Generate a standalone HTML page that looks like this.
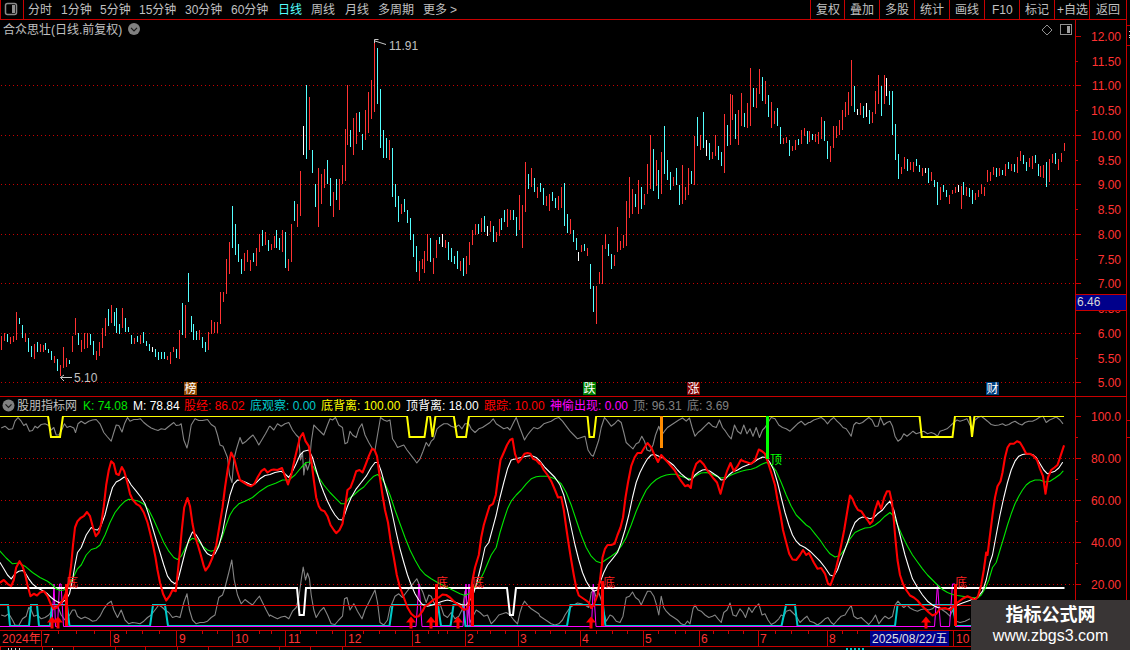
<!DOCTYPE html>
<html><head><meta charset="utf-8"><title>chart</title>
<style>
html,body{margin:0;padding:0;background:#000;}
#root{position:relative;width:1130px;height:650px;overflow:hidden;background:#000;font-family:"Liberation Sans","Noto Sans CJK SC",sans-serif;}
#root svg{position:absolute;left:0;top:0;}
.t{position:absolute;white-space:nowrap;line-height:16px;height:16px;}
</style></head><body>
<div id="root">
<svg width="1130" height="650" viewBox="0 0 1130 650" shape-rendering="crispEdges">
<rect x="0" y="19" width="1127" height="1" fill="#c80000"/>
<rect x="0" y="0" width="1" height="20" fill="#c80000"/>
<rect x="23" y="0" width="1" height="20" fill="#c80000"/>
<rect x="1075" y="20" width="1" height="610" fill="#c80000"/>
<rect x="1126" y="0" width="1" height="650" fill="#c80000"/>
<rect x="0" y="396" width="1127" height="1" fill="#c80000"/>
<rect x="0" y="630" width="1127" height="1" fill="#c80000"/>
<rect x="0" y="646" width="1127" height="1" fill="#c80000"/>
<rect x="0" y="647" width="1" height="3" fill="#c80000"/>
<rect x="42" y="647" width="1" height="3" fill="#c80000"/>
<rect x="73" y="647" width="1" height="3" fill="#c80000"/>
<rect x="115" y="647" width="1" height="3" fill="#c80000"/>
<rect x="145" y="647" width="1" height="3" fill="#c80000"/>
<rect x="177" y="647" width="1" height="3" fill="#c80000"/>
<rect x="208" y="647" width="1" height="3" fill="#c80000"/>
<rect x="279" y="647" width="1" height="3" fill="#c80000"/>
<rect x="310" y="647" width="1" height="3" fill="#c80000"/>
<rect x="342" y="647" width="1" height="3" fill="#c80000"/>
<rect x="8" y="648" width="1" height="2" fill="#d0d0d0"/>
<rect x="11" y="648" width="1" height="2" fill="#d0d0d0"/>
<rect x="15" y="648" width="1" height="2" fill="#d0d0d0"/>
<rect x="19" y="648" width="1" height="2" fill="#d0d0d0"/>
<rect x="52" y="648" width="1" height="2" fill="#d0d0d0"/>
<rect x="846" y="648" width="2" height="2" fill="#00c8c8"/>
<rect x="850" y="648" width="2" height="2" fill="#00c8c8"/>
<rect x="854" y="648" width="2" height="2" fill="#00c8c8"/>
<rect x="858" y="648" width="2" height="2" fill="#00c8c8"/>
<rect x="862" y="648" width="2" height="2" fill="#00c8c8"/>
<rect x="810" y="0" width="1" height="19" fill="#c80000"/>
<rect x="844" y="0" width="1" height="19" fill="#c80000"/>
<rect x="879" y="0" width="1" height="19" fill="#c80000"/>
<rect x="914" y="0" width="1" height="19" fill="#c80000"/>
<rect x="949" y="0" width="1" height="19" fill="#c80000"/>
<rect x="984" y="0" width="1" height="19" fill="#c80000"/>
<rect x="1019" y="0" width="1" height="19" fill="#c80000"/>
<rect x="1054" y="0" width="1" height="19" fill="#c80000"/>
<rect x="1089" y="0" width="1" height="19" fill="#c80000"/>
<rect x="5.5" y="3.5" width="11" height="11" rx="2" fill="none" stroke="#8a8a8a" stroke-width="1.5" shape-rendering="auto"/>
<rect x="12" y="5" width="3" height="8" fill="#909090"/>
<circle cx="134" cy="29" r="6" fill="#808080" shape-rendering="auto"/>
<path d="M131 27.8 L134 30.8 L137 27.8" fill="none" stroke="#181818" stroke-width="1.2" shape-rendering="auto"/>
<path d="M1047 25 L1052 30 L1047 35 L1042 30 Z" fill="none" stroke="#909090" stroke-width="1"/>
<rect x="1060.5" y="24.5" width="11" height="10" rx="1.5" fill="none" stroke="#909090" stroke-width="1.2"/>
<rect x="1067" y="26" width="3" height="7" fill="#a0a0a0"/>
<rect x="1076" y="36" width="5" height="1" fill="#c80000"/>
<rect x="1076" y="61" width="2" height="1" fill="#c80000"/>
<rect x="1076" y="85" width="5" height="1" fill="#c80000"/>
<line x1="1" y1="85.5" x2="1075" y2="85.5" stroke="#c80000" stroke-width="1" stroke-dasharray="1 3"/>
<rect x="1076" y="110" width="2" height="1" fill="#c80000"/>
<rect x="1076" y="135" width="5" height="1" fill="#c80000"/>
<line x1="1" y1="135.5" x2="1075" y2="135.5" stroke="#c80000" stroke-width="1" stroke-dasharray="1 3"/>
<rect x="1076" y="160" width="2" height="1" fill="#c80000"/>
<rect x="1076" y="184" width="5" height="1" fill="#c80000"/>
<line x1="1" y1="184.5" x2="1075" y2="184.5" stroke="#c80000" stroke-width="1" stroke-dasharray="1 3"/>
<rect x="1076" y="209" width="2" height="1" fill="#c80000"/>
<rect x="1076" y="234" width="5" height="1" fill="#c80000"/>
<line x1="1" y1="234.5" x2="1075" y2="234.5" stroke="#c80000" stroke-width="1" stroke-dasharray="1 3"/>
<rect x="1076" y="259" width="2" height="1" fill="#c80000"/>
<rect x="1076" y="283" width="5" height="1" fill="#c80000"/>
<line x1="1" y1="283.5" x2="1075" y2="283.5" stroke="#c80000" stroke-width="1" stroke-dasharray="1 3"/>
<rect x="1076" y="308" width="2" height="1" fill="#c80000"/>
<rect x="1076" y="333" width="5" height="1" fill="#c80000"/>
<line x1="1" y1="333.5" x2="1075" y2="333.5" stroke="#c80000" stroke-width="1" stroke-dasharray="1 3"/>
<rect x="1076" y="358" width="2" height="1" fill="#c80000"/>
<rect x="1076" y="382" width="5" height="1" fill="#c80000"/>
<line x1="1" y1="382.5" x2="1075" y2="382.5" stroke="#c80000" stroke-width="1" stroke-dasharray="1 3"/>
<rect x="1076" y="416" width="5" height="1" fill="#c80000"/>
<rect x="1076" y="437" width="2" height="1" fill="#c80000"/>
<rect x="1076" y="458" width="5" height="1" fill="#c80000"/>
<line x1="1" y1="458.5" x2="1075" y2="458.5" stroke="#c80000" stroke-width="1" stroke-dasharray="1 3"/>
<rect x="1076" y="479" width="2" height="1" fill="#c80000"/>
<rect x="1076" y="500" width="5" height="1" fill="#c80000"/>
<line x1="1" y1="500.5" x2="1075" y2="500.5" stroke="#c80000" stroke-width="1" stroke-dasharray="1 3"/>
<rect x="1076" y="521" width="2" height="1" fill="#c80000"/>
<rect x="1076" y="542" width="5" height="1" fill="#c80000"/>
<line x1="1" y1="542.5" x2="1075" y2="542.5" stroke="#c80000" stroke-width="1" stroke-dasharray="1 3"/>
<rect x="1076" y="563" width="2" height="1" fill="#c80000"/>
<rect x="1076" y="584" width="5" height="1" fill="#c80000"/>
<line x1="1" y1="584.5" x2="1075" y2="584.5" stroke="#c80000" stroke-width="1" stroke-dasharray="1 3"/>
<rect x="1127" y="25" width="3" height="1" fill="#c80000"/>
<rect x="1127" y="45" width="3" height="1" fill="#c80000"/>
<rect x="1127" y="420" width="3" height="1" fill="#c80000"/>
<rect x="1127" y="437" width="3" height="1" fill="#c80000"/>
<rect x="1129" y="31" width="1" height="1" fill="#d0d0d0"/>
<rect x="1129" y="35" width="1" height="1" fill="#d0d0d0"/>
<rect x="1129" y="37" width="1" height="1" fill="#d0d0d0"/>
<circle cx="8.5" cy="405.5" r="6" fill="#808080" shape-rendering="auto"/>
<path d="M5.5 404.3 L8.5 407.3 L11.5 404.3" fill="none" stroke="#181818" stroke-width="1.2" shape-rendering="auto"/>
<rect x="184" y="382" width="13" height="13" fill="#8b4500"/>
<rect x="583" y="382" width="13" height="13" fill="#008000"/>
<rect x="687" y="382" width="13" height="13" fill="#800000"/>
<rect x="986" y="382" width="13" height="13" fill="#004080"/>
<rect x="41" y="630" width="1" height="16" fill="#c80000"/>
<rect x="110" y="630" width="1" height="16" fill="#c80000"/>
<rect x="176" y="630" width="1" height="16" fill="#c80000"/>
<rect x="232" y="630" width="1" height="16" fill="#c80000"/>
<rect x="285" y="630" width="1" height="16" fill="#c80000"/>
<rect x="345" y="630" width="1" height="16" fill="#c80000"/>
<rect x="870" y="631" width="79" height="15" fill="#00008b"/>
<path d="M1 336h1v14h-1zM4 333h1v8h-1zM10 337h1v7h-1zM13 336h1v6h-1zM16 312h1v28h-1zM25 333h1v9h-1zM34 344h1v15h-1zM40 344h1v8h-1zM43 345h1v7h-1zM54 356h1v7h-1zM60 365h1v11h-1zM63 347h1v21h-1zM66 358h1v9h-1zM72 336h1v16h-1zM75 318h1v17h-1zM81 340h1v12h-1zM84 333h1v16h-1zM87 333h1v15h-1zM96 351h1v9h-1zM99 342h1v14h-1zM102 328h1v20h-1zM105 318h1v18h-1zM111 305h1v18h-1zM122 308h1v20h-1zM134 338h1v6h-1zM140 335h1v9h-1zM167 356h1v4h-1zM170 352h1v12h-1zM173 347h1v5h-1zM179 330h1v29h-1zM185 305h1v33h-1zM199 330h1v10h-1zM208 332h1v18h-1zM211 320h1v14h-1zM214 322h1v11h-1zM217 322h1v11h-1zM220 292h1v32h-1zM223 292h1v10h-1zM226 259h1v35h-1zM229 242h1v32h-1zM244 253h1v18h-1zM247 250h1v12h-1zM250 260h1v11h-1zM256 248h1v18h-1zM259 234h1v18h-1zM265 232h1v13h-1zM271 244h1v6h-1zM274 236h1v12h-1zM282 230h1v22h-1zM288 259h1v12h-1zM291 224h1v38h-1zM297 204h1v23h-1zM300 171h1v45h-1zM309 97h1v53h-1zM318 168h1v59h-1zM321 174h1v30h-1zM324 169h1v19h-1zM333 192h1v25h-1zM339 179h1v31h-1zM342 165h1v19h-1zM345 129h1v52h-1zM347 85h1v60h-1zM353 118h1v37h-1zM356 113h1v31h-1zM365 110h1v30h-1zM368 92h1v41h-1zM371 80h1v39h-1zM374 41h1v71h-1zM389 140h1v20h-1zM401 204h1v10h-1zM419 261h1v20h-1zM422 259h1v10h-1zM424 251h1v22h-1zM427 234h1v27h-1zM433 258h1v16h-1zM436 240h1v18h-1zM445 240h1v8h-1zM460 261h1v10h-1zM466 256h1v18h-1zM469 242h1v23h-1zM472 230h1v15h-1zM475 224h1v11h-1zM481 218h1v14h-1zM490 221h1v11h-1zM496 232h1v10h-1zM499 219h1v17h-1zM507 209h1v18h-1zM510 210h1v10h-1zM519 195h1v35h-1zM522 205h1v43h-1zM525 162h1v50h-1zM531 168h1v19h-1zM537 187h1v11h-1zM546 196h1v10h-1zM549 194h1v17h-1zM558 196h1v14h-1zM561 187h1v21h-1zM570 219h1v15h-1zM581 245h1v7h-1zM587 248h1v8h-1zM596 286h1v38h-1zM599 272h1v12h-1zM602 245h1v39h-1zM605 234h1v15h-1zM614 255h1v11h-1zM617 227h1v25h-1zM620 241h1v9h-1zM623 235h1v13h-1zM626 201h1v45h-1zM629 177h1v41h-1zM632 189h1v25h-1zM638 180h1v34h-1zM644 194h1v11h-1zM647 164h1v30h-1zM650 135h1v54h-1zM656 160h1v26h-1zM661 152h1v42h-1zM673 177h1v9h-1zM682 165h1v39h-1zM685 187h1v13h-1zM688 168h1v27h-1zM694 136h1v49h-1zM700 135h1v15h-1zM712 152h1v7h-1zM715 135h1v21h-1zM724 114h1v59h-1zM730 94h1v51h-1zM732 95h1v25h-1zM738 110h1v35h-1zM741 93h1v33h-1zM747 103h1v25h-1zM750 68h1v58h-1zM756 88h1v20h-1zM759 69h1v25h-1zM765 81h1v23h-1zM771 102h1v26h-1zM774 111h1v13h-1zM783 138h1v6h-1zM786 137h1v6h-1zM792 146h1v5h-1zM795 140h1v10h-1zM801 130h1v14h-1zM804 128h1v8h-1zM809 131h1v11h-1zM815 134h1v8h-1zM818 132h1v12h-1zM821 117h1v22h-1zM830 146h1v16h-1zM833 126h1v22h-1zM836 126h1v12h-1zM839 120h1v15h-1zM842 110h1v20h-1zM845 102h1v15h-1zM848 92h1v23h-1zM851 60h1v46h-1zM860 103h1v12h-1zM872 112h1v11h-1zM875 91h1v23h-1zM878 75h1v29h-1zM884 75h1v29h-1zM901 167h1v7h-1zM904 157h1v12h-1zM910 162h1v8h-1zM913 162h1v10h-1zM922 168h1v8h-1zM931 172h1v9h-1zM940 187h1v13h-1zM949 195h1v9h-1zM952 190h1v4h-1zM955 187h1v6h-1zM961 186h1v23h-1zM966 187h1v9h-1zM975 193h1v7h-1zM978 190h1v7h-1zM981 184h1v10h-1zM984 187h1v9h-1zM987 170h1v12h-1zM990 172h1v9h-1zM993 167h1v8h-1zM999 168h1v8h-1zM1005 164h1v12h-1zM1011 164h1v7h-1zM1017 157h1v16h-1zM1020 151h1v10h-1zM1029 158h1v9h-1zM1032 156h1v13h-1zM1040 166h1v11h-1zM1043 165h1v13h-1zM1049 159h1v23h-1zM1052 154h1v9h-1zM1058 159h1v11h-1zM1061 153h1v9h-1zM1064 143h1v8h-1z" fill="#ff3232"/>
<path d="M7 334h1v8h-1zM19 318h1v6h-1zM22 325h1v13h-1zM28 338h1v14h-1zM31 346h1v11h-1zM37 342h1v10h-1zM45 343h1v7h-1zM48 349h1v4h-1zM51 351h1v9h-1zM57 359h1v12h-1zM69 360h1v4h-1zM78 333h1v12h-1zM90 334h1v11h-1zM93 341h1v14h-1zM108 309h1v17h-1zM114 312h1v14h-1zM116 308h1v25h-1zM119 324h1v10h-1zM125 318h1v14h-1zM128 327h1v5h-1zM131 335h1v9h-1zM137 336h1v6h-1zM143 332h1v11h-1zM146 341h1v5h-1zM149 344h1v7h-1zM155 349h1v8h-1zM158 352h1v8h-1zM161 352h1v7h-1zM164 352h1v7h-1zM176 349h1v9h-1zM182 303h1v32h-1zM188 273h1v29h-1zM191 316h1v16h-1zM193 324h1v16h-1zM196 331h1v9h-1zM202 337h1v11h-1zM205 342h1v10h-1zM232 206h1v42h-1zM235 224h1v31h-1zM238 244h1v18h-1zM241 259h1v15h-1zM253 253h1v9h-1zM262 230h1v16h-1zM268 240h1v11h-1zM276 230h1v18h-1zM279 238h1v12h-1zM285 232h1v36h-1zM294 201h1v20h-1zM306 85h1v74h-1zM312 150h1v23h-1zM315 184h1v23h-1zM327 160h1v24h-1zM330 178h1v28h-1zM336 179h1v21h-1zM350 130h1v17h-1zM359 112h1v20h-1zM362 134h1v16h-1zM377 48h1v56h-1zM380 89h1v59h-1zM383 130h1v28h-1zM386 138h1v20h-1zM392 148h1v49h-1zM395 184h1v23h-1zM398 196h1v26h-1zM404 199h1v13h-1zM407 210h1v13h-1zM410 218h1v22h-1zM413 234h1v23h-1zM416 246h1v26h-1zM430 238h1v24h-1zM439 237h1v7h-1zM448 242h1v18h-1zM451 248h1v14h-1zM454 256h1v8h-1zM457 251h1v18h-1zM463 258h1v18h-1zM478 224h1v10h-1zM484 216h1v16h-1zM493 226h1v16h-1zM501 218h1v12h-1zM504 210h1v12h-1zM513 210h1v10h-1zM516 217h1v19h-1zM528 174h1v15h-1zM534 178h1v14h-1zM540 183h1v9h-1zM543 188h1v17h-1zM552 192h1v9h-1zM555 198h1v10h-1zM564 183h1v43h-1zM567 214h1v19h-1zM573 230h1v12h-1zM576 238h1v12h-1zM584 244h1v7h-1zM590 264h1v25h-1zM593 286h1v26h-1zM608 244h1v12h-1zM611 254h1v15h-1zM635 194h1v13h-1zM641 187h1v22h-1zM653 149h1v42h-1zM658 170h1v29h-1zM664 126h1v48h-1zM667 160h1v20h-1zM670 172h1v18h-1zM676 168h1v17h-1zM679 185h1v20h-1zM691 171h1v13h-1zM697 117h1v29h-1zM703 112h1v36h-1zM709 143h1v17h-1zM718 146h1v14h-1zM721 152h1v14h-1zM727 125h1v21h-1zM735 114h1v25h-1zM744 113h1v14h-1zM753 88h1v19h-1zM762 77h1v24h-1zM768 95h1v22h-1zM777 108h1v18h-1zM780 127h1v17h-1zM789 140h1v16h-1zM798 139h1v6h-1zM807 131h1v13h-1zM812 134h1v6h-1zM824 121h1v20h-1zM827 141h1v18h-1zM854 86h1v26h-1zM863 106h1v12h-1zM869 110h1v14h-1zM881 86h1v30h-1zM889 91h1v14h-1zM892 91h1v44h-1zM895 124h1v36h-1zM898 154h1v25h-1zM907 159h1v12h-1zM916 159h1v7h-1zM919 165h1v7h-1zM928 168h1v15h-1zM934 180h1v7h-1zM937 182h1v23h-1zM943 185h1v7h-1zM946 190h1v7h-1zM963 182h1v13h-1zM969 188h1v9h-1zM972 190h1v14h-1zM996 168h1v9h-1zM1002 170h1v5h-1zM1008 162h1v7h-1zM1014 164h1v8h-1zM1023 155h1v9h-1zM1026 162h1v9h-1zM1035 155h1v8h-1zM1038 164h1v12h-1zM1046 162h1v25h-1zM1055 153h1v11h-1z" fill="#54ffff"/>
<path d="M152 347h1v5h-1zM303 126h1v29h-1zM442 234h1v13h-1zM487 226h1v10h-1zM578 252h1v9h-1zM706 140h1v16h-1zM857 109h1v6h-1zM866 103h1v14h-1zM886 78h1v18h-1zM925 168h1v5h-1zM958 185h1v7h-1z" fill="#ffffff"/>
<path d="M374.5 43 V39.5 H378.5 M375 41 L386 44.5" fill="none" stroke="#c8c8c8" stroke-width="1" shape-rendering="auto"/>
<path d="M60.5 377.5 H72 M64 375 L60.5 377.5 L64 381" fill="none" stroke="#c8c8c8" stroke-width="1" shape-rendering="auto"/>
<g shape-rendering="auto" stroke-linejoin="round">
<polyline points="1.2,428.0 5.0,426.2 8.8,429.5 12.5,428.8 15.0,421.2 18.0,417.5 21.2,421.2 23.8,425.5 26.2,423.8 29.5,431.2 32.5,430.5 35.0,426.2 37.5,428.0 41.2,424.5 45.0,423.8 48.8,425.5 51.2,430.0 53.8,427.5 56.2,435.0 58.8,435.0 61.2,431.2 64.5,423.8 67.0,427.5 70.0,426.2 73.8,428.0 75.5,432.5 78.0,423.8 81.2,421.2 85.0,423.8 88.8,421.2 92.5,420.0 96.2,419.5 100.0,423.8 103.8,432.5 107.5,437.0 111.2,441.2 113.8,432.5 116.2,425.0 118.8,425.5 122.0,432.0 124.5,423.8 127.5,417.5 130.0,421.2 133.8,419.5 137.5,419.5 140.5,418.8 143.8,422.5 147.5,425.5 151.2,428.0 155.0,429.5 158.0,430.5 161.2,428.8 165.0,429.5 168.0,427.0 171.2,424.5 173.8,422.5 176.2,425.5 179.5,425.0 181.2,423.8 183.8,440.0 187.0,448.0 188.8,440.0 191.2,425.0 195.0,418.8 198.8,420.5 202.5,420.5 207.5,419.5 211.2,424.5 215.0,427.0 217.5,435.0 220.0,445.0 223.0,446.2 225.0,451.2 227.5,457.5 229.5,475.0 232.0,482.5 233.8,460.0 236.2,450.0 240.0,437.5 242.5,443.8 246.2,441.2 250.0,437.5 253.0,435.0 256.2,440.0 258.8,445.0 262.5,438.8 265.5,433.8 269.5,426.2 270.0,426.2 273.8,430.0 277.5,423.8 281.2,426.2 285.0,423.8 288.8,422.5 292.5,430.0 296.2,435.0 298.8,437.5 300.5,460.0 302.5,452.5 303.8,475.0 305.5,462.5 307.5,470.0 309.5,463.8 311.2,442.5 313.8,425.0 317.5,428.8 321.2,432.5 323.8,435.0 327.5,425.0 330.0,418.8 332.5,420.0 335.5,417.5 338.8,425.0 342.5,427.5 345.0,443.8 347.5,442.5 350.0,431.2 352.5,435.0 356.2,437.5 358.8,428.8 362.0,423.8 365.0,435.0 368.8,442.5 372.5,448.8 375.0,450.0 377.5,435.0 380.5,417.5 383.8,420.0 387.0,421.2 390.0,420.0 392.5,438.8 395.0,442.5 397.5,447.5 400.5,446.2 403.8,445.0 407.0,450.0 410.0,453.8 413.8,458.8 416.8,463.0 420.0,458.8 423.0,451.2 426.2,442.5 428.8,446.2 431.2,441.2 433.8,438.8 437.0,428.8 440.0,426.2 443.8,423.8 447.5,423.8 451.2,426.2 455.0,427.5 458.8,425.0 462.0,428.8 465.0,423.8 468.8,423.8 471.2,428.8 475.0,432.5 478.8,428.8 482.5,427.5 486.2,425.0 490.0,422.5 493.2,418.8 496.2,423.8 500.0,426.2 503.8,428.8 507.5,427.5 510.0,430.0 513.0,423.8 516.2,417.5 518.8,425.0 521.2,431.2 524.5,440.0 527.5,435.0 530.5,431.2 533.8,427.5 537.5,428.8 540.0,427.5 543.8,423.8 547.5,422.5 551.2,421.2 555.0,418.8 558.8,417.5 562.5,421.2 566.2,426.2 570.0,431.2 573.8,435.0 577.5,438.8 581.2,437.5 585.0,436.2 588.0,450.0 591.2,455.0 593.2,456.2 595.5,450.0 598.8,440.0 601.2,427.5 604.5,417.5 607.5,421.2 611.2,426.2 614.5,423.8 618.0,420.0 621.2,422.5 623.8,432.5 626.2,442.5 630.0,446.2 633.0,448.8 636.2,443.8 638.8,442.5 641.8,436.2 644.5,441.2 647.0,450.0 650.0,451.2 653.0,445.0 655.5,435.0 658.8,426.2 661.8,435.0 664.5,431.2 667.5,427.5 671.2,425.0 675.0,422.5 678.8,420.0 682.5,418.0 686.2,421.2 689.5,418.0 692.5,428.8 695.0,436.2 698.0,432.5 701.2,430.0 705.0,426.2 708.8,422.5 712.5,426.2 716.2,427.5 719.5,420.0 722.5,427.5 725.5,431.2 728.8,436.2 731.2,438.8 734.5,425.0 737.5,431.2 740.8,433.8 743.8,425.0 747.0,433.8 750.0,428.8 753.0,436.2 756.2,427.5 759.5,437.5 762.5,430.0 765.0,427.5 768.0,422.5 771.2,417.5 775.0,418.8 778.8,425.0 782.5,427.5 786.2,428.8 790.0,431.2 793.8,427.5 797.5,423.8 801.2,421.2 805.0,425.0 808.8,422.5 810.0,422.5 813.8,420.0 817.5,418.8 821.2,417.5 824.5,420.0 827.5,423.8 830.5,420.0 833.8,417.5 837.0,421.2 840.0,423.8 843.0,427.5 846.2,428.8 848.8,432.5 851.2,436.2 853.8,425.0 856.2,422.5 859.2,423.8 862.5,422.5 865.5,420.0 868.8,417.5 872.0,420.0 875.0,426.2 878.0,426.2 880.5,417.5 883.8,425.0 887.0,422.5 890.0,421.2 892.5,426.2 895.0,436.2 898.0,441.2 901.2,438.8 903.8,433.8 907.0,436.2 910.0,433.8 913.0,431.2 916.2,433.8 920.0,432.5 923.8,431.2 927.5,433.8 931.2,432.5 934.5,433.8 937.5,436.2 940.0,431.2 943.8,430.0 947.0,428.8 950.0,426.2 953.8,422.5 957.0,420.0 960.0,421.2 963.8,420.0 967.0,418.8 970.0,425.0 972.5,427.5 975.0,420.0 978.0,417.5 981.2,416.2 984.5,418.8 987.5,421.2 991.2,424.5 995.0,425.5 998.8,425.0 1002.5,423.8 1005.5,425.5 1008.8,424.5 1012.0,422.5 1015.0,421.2 1018.8,423.8 1022.0,425.0 1025.0,422.5 1028.8,421.2 1032.5,421.2 1036.2,419.5 1040.0,417.0 1043.0,416.2 1046.2,422.5 1049.5,420.0 1052.5,418.8 1056.2,417.0 1060.0,420.0 1063.0,423.8" fill="none" stroke="#858585" stroke-width="1.1" />
<polyline points="1.2,615.0 5.0,616.2 8.8,613.8 12.5,620.0 15.0,625.0 18.8,625.5 22.5,618.8 26.2,616.2 28.8,607.5 31.2,610.0 33.8,616.2 37.5,615.0 41.2,618.8 45.0,617.5 48.8,615.0 52.5,610.0 56.2,606.2 58.8,608.8 61.2,615.0 65.0,620.0 68.8,616.2 72.5,610.0 75.0,610.0 77.5,616.2 81.2,618.8 85.0,617.0 88.8,618.8 92.5,621.2 96.2,620.5 100.0,616.2 103.8,608.8 107.5,603.8 111.2,601.2 113.8,610.0 117.5,617.5 121.2,610.0 125.0,620.0 128.8,623.8 132.5,622.5 136.2,623.0 140.0,623.8 143.8,621.2 147.5,617.5 151.2,615.0 155.0,610.0 158.8,605.0 162.5,607.5 165.0,610.0 168.8,612.5 172.5,617.5 176.2,616.2 180.0,617.5 183.8,602.5 187.0,593.8 189.5,610.0 192.5,620.0 196.2,623.8 200.0,622.5 203.8,622.5 207.5,621.2 211.2,617.5 215.0,615.0 218.8,597.5 222.5,595.0 225.0,587.5 228.8,572.5 231.8,560.0 234.2,580.0 237.5,595.0 241.2,603.8 245.0,599.5 248.8,602.5 252.5,605.0 256.2,600.0 259.5,596.2 262.5,602.5 266.2,610.0 269.5,616.2 270.0,615.0 273.8,617.0 277.5,618.8 281.2,617.0 285.0,616.2 288.8,618.8 292.5,611.2 296.2,607.5 298.8,597.5 301.2,580.0 303.2,567.0 305.5,580.0 307.5,573.0 309.5,578.8 311.2,595.0 313.8,610.0 316.2,617.5 320.0,611.2 323.8,607.5 327.5,615.0 331.2,623.8 335.0,624.5 338.8,620.0 342.5,616.2 344.5,598.8 347.0,597.5 350.0,610.0 353.8,603.8 357.5,611.2 362.0,618.8 365.0,610.0 368.8,602.5 372.5,595.0 375.0,590.0 377.5,602.5 380.0,622.5 383.8,625.0 387.5,620.0 390.0,607.5 392.5,602.5 395.0,596.2 398.8,593.8 402.5,597.5 406.2,592.5 410.0,587.5 413.8,582.5 416.8,578.8 420.0,586.2 423.0,592.5 426.2,602.5 428.8,595.0 431.2,596.2 433.8,602.5 436.2,605.0 440.0,603.8 443.8,615.0 447.5,617.5 451.2,612.5 455.0,618.8 458.8,616.2 462.5,608.8 465.0,591.2 467.5,605.0 470.0,622.5 473.0,616.2 476.2,610.0 480.0,612.5 483.8,616.2 487.5,615.0 491.2,623.8 495.0,620.0 498.8,615.0 502.5,613.8 506.2,612.5 510.0,615.0 513.8,620.0 517.5,623.8 520.0,612.5 522.5,605.0 524.5,601.2 527.5,605.0 531.2,608.8 535.0,611.2 538.8,613.8 540.0,616.2 543.8,618.8 547.5,621.2 551.2,623.8 555.0,625.0 558.8,623.8 562.5,620.0 565.0,615.0 567.5,611.2 570.0,607.5 573.8,605.0 577.5,603.0 581.2,603.8 585.0,605.0 588.8,607.5 591.2,592.5 593.8,590.0 596.2,597.5 598.8,592.5 601.2,600.0 603.8,612.5 606.2,621.2 610.0,615.0 612.5,616.2 616.2,621.2 620.0,622.5 623.0,616.2 626.2,597.5 629.5,596.2 632.5,592.0 635.5,597.5 638.8,600.0 641.2,605.0 644.5,597.5 647.5,591.2 650.5,591.2 653.8,596.2 656.2,603.8 658.8,615.0 661.2,596.2 663.8,607.5 666.2,611.2 670.0,615.0 673.8,617.5 677.5,620.0 681.2,623.8 684.5,625.0 687.5,621.2 690.0,623.8 693.0,608.8 695.0,605.0 698.0,610.0 701.2,611.2 705.0,615.0 708.8,617.5 712.5,616.2 715.0,615.0 718.0,618.8 721.2,622.5 723.8,612.5 727.0,610.0 730.0,603.0 733.0,615.0 736.2,616.2 740.0,608.8 743.0,612.5 745.5,617.5 748.8,607.5 752.0,612.5 755.0,607.5 758.8,603.8 762.0,615.0 765.0,613.8 768.0,620.0 771.2,624.5 775.0,622.5 778.8,618.8 781.2,615.0 783.8,616.2 786.2,611.2 790.0,610.0 792.5,612.5 796.2,616.2 800.0,622.5 803.8,618.8 807.0,616.2 810.0,621.2 813.8,622.5 817.5,625.0 821.2,622.5 825.0,618.8 828.0,617.5 831.2,622.5 833.8,624.5 837.5,620.0 841.2,616.2 845.0,615.0 848.0,610.0 851.2,605.5 853.8,616.2 857.5,618.8 861.2,617.5 865.0,621.2 868.8,624.5 872.5,620.0 875.5,615.0 878.8,623.8 882.5,618.8 885.0,616.2 888.8,618.8 892.5,616.2 895.0,605.0 898.0,601.2 901.2,605.0 903.8,607.5 907.0,605.0 910.0,608.0 913.8,610.0 917.5,611.2 921.2,609.5 925.0,608.8 928.8,610.0 932.5,608.8 935.0,606.2 938.8,607.5 942.5,610.0 946.2,612.5 950.0,616.2 952.5,610.0 956.2,621.2 960.0,622.5 965.0,621.2 970.0,618.8" fill="none" stroke="#858585" stroke-width="1.1" />
</g>
<g shape-rendering="auto" stroke-linejoin="miter">
<polyline points="0.0,605.0 8.0,605.0 10.0,626.0 29.0,626.0 31.0,605.0 37.0,605.0 39.0,626.0 50.0,626.0 52.0,605.0 67.0,605.0 69.5,626.0 150.0,626.0 153.0,605.0 165.0,605.0 168.0,626.0 389.5,626.0 392.5,605.0 438.0,605.0 441.0,626.0 450.5,626.0 453.5,605.0 463.0,605.0 465.5,626.0 567.0,626.0 570.5,605.0 603.0,605.0 605.5,626.0 781.5,626.0 786.0,605.0 795.0,605.0 797.5,626.0 895.0,626.0 897.5,605.0 953.0,605.0 956.0,626.0 1064.0,626.0" fill="none" stroke="#00c8c8" stroke-width="2" />
<polyline points="0.0,626.5 52.0,626.5 54.0,584.0 55.5,626.5 57.5,626.5 59.5,584.0 61.0,584.0 63.5,626.5 416.0,626.5 419.0,584.0 422.0,626.5 463.0,626.5 466.0,584.0 467.5,626.5 469.0,584.0 470.0,626.5 591.5,626.5 593.3,584.0 596.0,626.5 934.5,626.5 937.5,584.0 940.5,626.5 949.5,626.5 952.5,584.0 955.0,584.0 956.0,626.5 1064.0,626.5" fill="none" stroke="#ff00ff" stroke-width="1" />
<rect x="0" y="605" width="1075" height="1" fill="#e00000"/>
<clipPath id="cp"><rect x="0" y="416" width="1075" height="214"/></clipPath>
<polyline points="0.0,416.0 48.0,416.0 51.0,437.0 60.0,437.0 63.0,416.0 407.0,416.0 409.5,437.0 424.5,437.0 427.5,416.0 430.0,416.0 432.5,437.0 435.5,416.0 453.8,416.0 457.0,437.0 466.0,437.0 469.0,416.0 587.5,416.0 589.5,437.0 593.8,437.0 596.2,416.0 919.5,416.0 921.8,437.0 952.5,437.0 955.0,416.0 970.0,416.0 972.0,437.0 974.5,416.0 1064.0,416.0" fill="none" stroke="#ffff00" stroke-width="2" clip-path="url(#cp)"/>
<polyline points="0.0,588.0 297.0,588.0 299.5,615.0 303.8,615.0 306.0,588.0 507.0,588.0 510.0,615.0 513.0,615.0 516.0,588.0 1064.5,588.0" fill="none" stroke="#ffffff" stroke-width="2" />
</g>
<g shape-rendering="auto" stroke-linejoin="round" stroke-linecap="round">
<polyline points="0.0,551.2 6.2,558.0 12.5,563.8 18.8,563.0 25.0,566.2 32.5,572.5 40.0,577.5 47.5,581.2 52.5,585.0 56.2,588.8 60.0,590.5 63.8,590.0 68.8,585.0 73.8,576.2 77.5,568.8 81.2,565.0 86.2,555.0 91.2,549.5 96.2,548.0 100.0,545.0 105.0,535.0 110.0,522.5 115.0,512.5 120.0,506.2 125.0,501.2 128.8,499.2 133.8,500.0 138.8,501.2 143.8,504.2 148.8,510.0 153.8,520.0 158.8,531.2 163.8,542.5 168.8,551.2 173.8,557.5 177.5,559.5 181.2,556.2 185.0,548.8 188.8,541.2 192.5,538.2 197.5,540.0 202.5,546.2 207.5,550.0 211.2,551.2 215.0,550.0 218.8,545.0 222.5,536.2 226.2,525.0 230.0,515.0 233.8,508.8 238.8,503.8 245.0,501.2 252.5,497.5 260.0,491.2 267.5,486.2 276.2,483.0 282.5,480.0 288.8,480.0 295.0,475.0 301.2,467.5 306.2,462.5 310.0,462.0 313.8,467.5 318.8,477.5 323.8,485.0 330.0,492.5 336.2,498.8 341.2,503.8 345.0,503.8 348.8,498.8 353.8,495.0 358.8,490.5 363.8,487.0 368.8,481.2 373.8,476.2 377.5,474.5 381.2,477.5 385.0,483.8 390.0,495.0 395.0,510.0 400.0,523.8 405.0,537.5 410.0,550.0 415.0,560.0 420.0,568.8 425.0,574.5 431.2,578.8 437.5,582.5 445.0,586.2 452.5,590.0 460.0,593.8 465.0,595.5 468.8,593.8 472.5,590.0 476.2,585.0 480.0,580.0 483.8,572.5 487.5,563.8 491.2,555.0 496.2,547.5 500.0,532.5 503.8,520.0 507.5,508.8 511.2,501.2 516.2,495.0 521.2,490.0 526.2,483.8 531.2,478.8 536.2,476.8 540.0,476.2 547.5,476.2 555.0,478.8 561.2,483.8 566.2,492.5 571.2,505.0 576.2,520.0 581.2,535.0 586.2,547.5 591.2,556.2 596.2,561.2 601.2,563.0 606.2,559.5 611.2,556.2 616.2,552.5 621.2,546.2 626.2,537.5 631.2,525.0 636.2,511.2 641.2,500.0 646.2,490.0 651.2,483.8 656.2,479.5 661.2,476.8 666.2,475.0 671.2,474.2 676.2,474.2 681.2,476.2 686.2,478.0 691.2,478.8 696.2,475.5 701.2,473.0 706.2,472.5 711.2,473.8 716.2,476.2 721.2,478.0 726.2,477.5 731.2,475.0 736.2,473.0 741.2,471.2 746.2,470.0 751.2,469.2 756.2,467.5 761.2,464.5 766.2,462.5 771.2,464.5 776.2,471.2 781.2,482.5 786.2,495.0 791.2,506.2 796.2,515.0 801.2,520.0 806.2,525.0 810.0,527.5 815.0,533.8 820.0,540.0 825.0,547.5 830.0,553.8 835.0,557.0 840.0,555.5 845.0,548.8 850.0,538.8 855.0,532.5 860.0,530.0 865.0,528.0 870.0,527.5 875.0,525.0 880.0,521.2 885.0,516.2 890.0,512.5 893.8,516.2 897.5,525.0 902.5,536.2 907.5,546.2 912.5,555.0 917.5,562.0 922.5,568.8 927.5,575.0 932.5,580.0 937.5,585.0 942.5,589.5 947.5,592.5 952.5,594.5 957.5,595.5 962.5,596.2 967.5,597.0 972.5,597.5 977.5,598.0 981.2,595.0 985.0,588.8 988.8,580.0 992.5,567.5 996.2,562.5 1000.0,550.0 1003.8,537.5 1007.5,525.0 1011.2,513.8 1015.0,503.8 1018.8,496.2 1022.5,490.0 1026.2,485.0 1030.0,482.0 1035.0,480.0 1040.0,480.0 1045.0,482.0 1050.0,481.2 1055.0,478.0 1060.0,474.5 1063.0,471.2" fill="none" stroke="#00e600" stroke-width="1.1" />
<polyline points="0.0,562.5 3.8,568.8 7.5,575.0 11.2,578.8 15.0,573.8 18.8,571.2 22.5,570.5 25.0,572.5 28.8,578.8 32.5,583.8 37.5,588.0 42.5,590.5 47.5,593.8 51.2,597.5 55.0,600.5 58.8,602.5 62.5,602.0 66.2,599.5 69.5,593.8 72.5,580.0 75.0,565.0 77.5,552.5 81.2,547.5 86.2,535.0 91.2,527.5 94.5,529.5 97.5,530.0 100.8,526.2 105.0,515.0 108.8,500.0 112.5,487.5 116.2,482.0 120.0,480.0 124.2,477.0 127.5,478.8 131.2,485.0 136.2,491.2 141.2,497.5 145.0,503.8 148.8,515.0 152.5,527.5 156.2,540.0 160.0,552.5 163.8,565.0 167.5,576.2 171.2,581.2 175.0,583.8 178.0,580.0 181.2,567.5 185.0,552.5 188.8,540.0 192.5,532.0 196.2,535.0 200.0,541.2 203.8,548.8 207.5,553.8 211.2,555.8 215.0,553.8 218.8,546.2 222.5,532.5 226.2,512.5 230.0,495.0 233.8,483.8 237.5,480.0 241.2,480.5 246.2,482.5 251.2,485.0 255.0,483.8 260.0,478.8 265.0,475.5 270.0,474.5 275.0,472.5 281.2,471.2 285.0,473.8 288.8,477.5 292.5,471.2 296.2,463.8 300.0,455.0 303.8,451.2 308.8,450.0 312.5,457.5 316.2,470.0 320.0,482.5 323.8,492.5 327.5,501.2 331.2,508.8 335.0,515.0 338.8,519.5 342.0,520.0 344.5,515.0 347.5,506.2 351.2,497.5 356.2,488.8 361.2,482.5 366.2,476.2 371.2,467.5 375.0,462.5 378.0,462.5 381.2,471.2 385.0,485.0 388.8,498.8 392.5,515.0 396.2,532.5 400.0,548.8 403.8,562.5 407.5,575.0 411.2,585.0 415.0,593.8 418.8,600.0 422.5,604.5 427.5,606.2 432.5,605.0 437.5,603.0 442.5,601.2 447.5,600.0 452.5,601.2 457.5,603.0 462.5,605.0 466.2,605.0 470.0,600.0 473.8,592.5 477.5,580.0 481.2,565.0 485.0,547.5 488.8,542.5 492.5,528.8 496.2,515.0 500.0,497.5 503.8,482.5 507.5,468.8 511.2,460.0 516.2,458.8 521.2,457.5 526.2,456.2 531.2,455.5 536.2,457.5 540.0,461.2 545.0,467.5 550.0,472.5 555.0,477.5 560.0,485.0 563.8,495.0 567.5,510.0 571.2,527.5 575.0,545.0 578.8,560.0 582.5,572.5 586.2,581.2 590.0,587.5 593.8,591.2 597.0,590.0 600.0,582.5 603.8,572.5 607.5,565.0 612.5,558.8 617.5,552.5 621.2,542.5 625.0,530.0 628.8,515.0 632.5,497.5 636.2,482.5 640.0,472.5 643.8,465.0 647.5,458.8 651.2,455.0 655.0,454.5 658.8,456.2 662.5,457.5 666.2,460.0 670.0,462.5 673.8,465.5 677.5,470.0 681.2,473.8 685.0,477.0 688.8,480.0 692.0,479.5 695.0,475.0 698.8,472.0 702.5,470.0 706.2,469.5 710.0,471.2 713.8,473.8 717.5,476.2 721.2,480.0 725.0,479.5 728.8,475.0 732.5,472.0 737.5,470.0 742.5,467.0 747.5,465.0 752.5,463.0 757.5,459.5 762.5,457.0 766.2,457.5 770.0,462.5 773.8,470.0 777.5,482.5 781.2,497.5 785.0,512.5 788.8,525.0 792.5,535.0 796.2,541.2 800.0,545.0 805.0,547.5 810.0,551.2 815.0,556.2 820.0,561.2 825.0,567.5 830.0,575.0 833.8,576.2 837.5,570.0 840.0,562.5 843.8,552.5 847.5,542.5 851.2,531.2 855.0,522.5 858.8,518.8 862.5,517.0 866.2,517.5 870.0,518.8 873.8,517.5 877.5,513.8 882.5,510.0 886.2,505.0 890.0,501.2 893.8,510.0 897.5,525.0 901.2,540.0 905.0,555.0 908.8,567.5 912.5,578.8 917.5,587.5 922.5,595.0 927.5,601.2 932.5,605.0 937.5,607.5 942.5,608.8 947.5,608.8 952.5,607.5 957.5,605.0 962.5,603.0 967.5,601.2 972.5,599.5 977.5,597.5 982.5,591.2 986.2,580.0 990.0,562.5 992.5,555.0 996.2,535.0 1000.0,515.0 1003.8,497.5 1007.5,482.5 1011.2,470.0 1015.0,461.2 1018.8,456.2 1022.5,454.5 1027.5,453.8 1032.5,454.5 1036.2,457.5 1040.0,463.8 1043.8,470.0 1047.5,473.8 1051.2,472.5 1055.0,471.2 1058.8,468.0 1062.5,462.5" fill="none" stroke="#ffffff" stroke-width="1.1" />
<polyline points="0.0,582.5 3.8,580.0 7.5,583.8 11.2,586.2 13.8,580.0 16.2,567.5 19.5,561.2 22.5,566.2 25.0,573.8 27.5,585.0 30.5,596.2 33.8,593.8 37.0,595.5 40.0,592.5 43.8,591.2 47.5,596.2 51.2,605.0 53.8,608.8 57.0,607.5 60.0,603.8 63.0,600.0 65.5,593.8 68.8,582.5 71.2,565.0 73.0,545.0 75.0,527.5 77.5,521.2 80.5,518.0 83.8,516.2 87.0,512.0 90.0,516.2 93.0,527.5 95.8,536.2 98.8,532.5 101.2,523.8 103.8,506.2 106.2,485.0 108.8,470.0 111.2,461.2 113.8,463.8 116.2,473.8 118.8,475.0 121.8,467.0 124.2,471.2 127.0,481.2 130.0,493.8 132.5,499.5 136.2,503.8 140.0,506.2 143.8,512.5 147.5,522.5 150.0,532.5 153.0,545.0 155.5,557.5 157.5,570.0 160.0,582.5 163.0,593.8 166.2,600.5 169.5,596.2 172.5,590.0 175.8,591.2 177.5,575.0 179.5,555.0 181.8,530.0 184.2,507.5 187.5,498.0 190.0,506.2 192.5,523.8 195.0,536.2 198.0,545.5 200.8,555.0 203.8,566.2 205.5,570.5 208.8,566.2 212.5,557.5 216.2,545.5 219.2,527.5 222.5,507.5 225.0,487.5 228.0,467.5 231.2,452.5 234.2,458.8 237.0,470.0 240.0,480.0 243.8,482.5 247.5,485.0 251.2,486.2 254.5,483.8 257.5,477.5 261.2,471.2 264.5,468.8 267.5,472.5 271.2,470.0 273.8,469.5 277.5,470.0 282.0,468.0 285.0,476.2 288.0,484.5 291.2,475.0 294.2,461.2 297.5,447.5 300.0,437.5 303.0,433.0 305.5,441.2 308.8,446.2 311.2,460.0 313.8,480.0 316.2,497.5 318.8,506.2 321.2,510.0 324.5,511.2 327.5,516.2 330.5,525.0 333.8,530.0 336.2,533.2 339.5,530.0 342.5,523.8 345.0,507.5 347.5,490.0 350.5,487.5 353.8,478.8 356.2,471.2 359.5,470.0 362.5,472.5 365.5,465.0 368.8,456.2 372.0,448.8 374.5,450.0 377.0,456.2 379.5,475.0 382.5,495.0 385.0,510.0 388.0,522.5 390.5,540.0 393.8,557.5 396.8,575.0 400.0,587.5 403.8,597.5 407.5,607.5 411.2,613.8 415.0,617.0 418.8,616.2 422.5,611.2 425.0,606.2 428.8,603.8 433.8,599.5 438.8,597.5 442.5,594.5 446.2,595.0 450.0,597.5 455.0,602.5 460.0,606.2 463.8,610.0 467.5,608.8 470.0,597.5 472.5,580.0 475.0,567.5 478.8,555.0 481.2,537.5 483.8,525.0 486.8,515.0 489.5,506.2 493.0,503.8 495.8,495.0 498.0,477.5 500.5,460.0 503.8,452.5 507.0,445.0 510.0,440.0 512.5,438.8 515.0,453.8 518.2,462.5 521.2,458.8 524.5,453.8 527.5,453.0 530.5,453.8 533.0,458.8 536.2,460.0 539.5,463.8 540.0,462.5 543.8,470.0 547.5,475.0 551.2,481.2 555.0,490.0 558.0,497.5 561.2,497.0 563.8,510.0 566.2,527.5 568.8,545.0 571.2,560.0 573.8,575.0 576.2,587.5 578.8,595.5 582.5,598.0 586.2,600.5 588.8,602.5 591.2,608.0 593.8,605.0 597.5,595.0 600.0,580.0 601.8,565.0 602.5,557.5 605.0,548.8 607.5,545.0 611.2,545.0 614.5,543.8 617.5,535.0 620.5,527.5 623.0,517.5 625.5,497.5 628.0,482.5 631.2,466.2 634.5,457.5 637.5,453.0 641.2,453.0 644.5,447.5 647.5,443.0 651.2,447.5 654.5,455.0 658.0,462.0 661.2,455.0 664.5,458.8 668.0,462.5 671.2,466.2 674.5,470.0 678.0,476.2 681.2,481.2 685.0,486.2 688.0,485.0 690.8,488.0 693.0,472.5 696.2,463.8 700.0,460.5 703.8,464.5 707.0,470.0 710.0,473.8 713.8,478.8 717.0,482.5 720.5,493.8 723.8,481.2 727.0,471.2 730.5,463.0 733.8,471.2 737.5,466.2 740.8,460.0 743.8,461.2 747.5,462.5 751.2,463.8 755.0,460.0 758.8,449.5 762.0,451.2 765.0,453.8 768.0,462.5 771.2,472.5 775.0,485.0 777.5,500.0 780.5,515.0 783.0,530.0 786.2,542.5 789.2,553.8 792.5,559.5 796.2,560.0 800.0,555.0 803.0,550.0 806.2,555.0 808.8,553.0 810.0,555.0 813.8,562.5 817.5,568.8 821.2,568.0 825.0,573.8 828.0,583.8 830.5,585.0 833.8,576.2 836.2,567.5 838.0,560.0 841.2,545.0 844.2,530.0 847.5,510.0 850.0,495.5 852.5,498.8 855.0,505.0 858.0,510.0 861.2,511.2 864.5,516.2 867.5,520.0 870.0,523.8 872.5,521.2 875.0,510.0 878.0,501.2 881.2,508.8 884.2,497.5 887.0,491.2 889.5,491.2 892.0,502.5 893.8,520.0 895.5,540.0 897.5,560.0 900.0,575.0 903.0,583.8 906.2,590.0 910.0,595.5 913.8,597.5 917.5,600.5 921.2,605.0 925.0,608.8 928.8,612.5 932.5,615.5 936.2,613.8 940.0,608.8 945.0,608.0 950.0,610.0 953.8,606.2 957.5,602.5 962.5,598.8 967.5,596.2 971.2,598.0 975.0,600.0 978.0,596.2 981.2,585.0 983.8,570.0 986.2,552.5 987.5,555.0 990.0,535.0 992.5,515.0 995.0,497.5 997.5,486.2 1000.5,481.2 1002.5,472.5 1005.0,457.5 1007.5,447.5 1010.0,443.8 1013.8,443.8 1017.0,441.2 1020.0,442.5 1023.0,447.5 1026.2,453.8 1030.0,453.8 1033.8,456.2 1037.0,460.0 1040.0,468.8 1043.0,476.2 1045.5,493.8 1048.0,477.5 1051.2,470.0 1054.5,467.5 1057.5,465.0 1060.5,456.2 1063.8,446.2" fill="none" stroke="#ff0000" stroke-width="2.1" />
</g>
<rect x="660" y="416" width="3" height="32" fill="#ff8c00"/>
<rect x="766" y="416" width="3" height="43" fill="#00ff00"/>
<rect x="65" y="584" width="3" height="42" fill="#ff0000"/>
<rect x="435" y="584" width="3" height="42" fill="#ff0000"/>
<rect x="471" y="584" width="3" height="42" fill="#ff0000"/>
<rect x="601" y="581" width="3" height="45" fill="#ff0000"/>
<rect x="954" y="584" width="3" height="42" fill="#ff0000"/>
<path d="M52 616.5 l5 6 h-3.5 v6 h-3 v-6 h-3.5 z" fill="#ff0000" shape-rendering="auto"/>
<path d="M58 616.5 l5 6 h-3.5 v6 h-3 v-6 h-3.5 z" fill="#ff0000" shape-rendering="auto"/>
<path d="M411 616.5 l5 6 h-3.5 v6 h-3 v-6 h-3.5 z" fill="#ff0000" shape-rendering="auto"/>
<path d="M431 616.5 l5 6 h-3.5 v6 h-3 v-6 h-3.5 z" fill="#ff0000" shape-rendering="auto"/>
<path d="M458 616.5 l5 6 h-3.5 v6 h-3 v-6 h-3.5 z" fill="#ff0000" shape-rendering="auto"/>
<path d="M591 616.5 l5 6 h-3.5 v6 h-3 v-6 h-3.5 z" fill="#ff0000" shape-rendering="auto"/>
<path d="M926 616.5 l5 6 h-3.5 v6 h-3 v-6 h-3.5 z" fill="#ff0000" shape-rendering="auto"/>
<rect x="412" y="630" width="1" height="16" fill="#c80000"/>
<rect x="465" y="630" width="1" height="16" fill="#c80000"/>
<rect x="518" y="630" width="1" height="16" fill="#c80000"/>
<rect x="580" y="630" width="1" height="16" fill="#c80000"/>
<rect x="643" y="630" width="1" height="16" fill="#c80000"/>
<rect x="699" y="630" width="1" height="16" fill="#c80000"/>
<rect x="758" y="630" width="1" height="16" fill="#c80000"/>
<rect x="827" y="630" width="1" height="16" fill="#c80000"/>
<rect x="953" y="630" width="1" height="16" fill="#c80000"/>
<rect x="58" y="631" width="1" height="3" fill="#c80000"/>
<rect x="76" y="631" width="1" height="3" fill="#c80000"/>
<rect x="94" y="631" width="1" height="3" fill="#c80000"/>
<rect x="126" y="631" width="1" height="3" fill="#c80000"/>
<rect x="142" y="631" width="1" height="3" fill="#c80000"/>
<rect x="159" y="631" width="1" height="3" fill="#c80000"/>
<rect x="202" y="631" width="1" height="3" fill="#c80000"/>
<rect x="217" y="631" width="1" height="3" fill="#c80000"/>
<rect x="259" y="631" width="1" height="3" fill="#c80000"/>
<rect x="271" y="631" width="1" height="3" fill="#c80000"/>
<rect x="300" y="631" width="1" height="3" fill="#c80000"/>
<rect x="316" y="631" width="1" height="3" fill="#c80000"/>
<rect x="332" y="631" width="1" height="3" fill="#c80000"/>
<rect x="363" y="631" width="1" height="3" fill="#c80000"/>
<rect x="379" y="631" width="1" height="3" fill="#c80000"/>
<rect x="395" y="631" width="1" height="3" fill="#c80000"/>
<rect x="428" y="631" width="1" height="3" fill="#c80000"/>
<rect x="438" y="631" width="1" height="3" fill="#c80000"/>
<rect x="447" y="631" width="1" height="3" fill="#c80000"/>
<rect x="477" y="631" width="1" height="3" fill="#c80000"/>
<rect x="490" y="631" width="1" height="3" fill="#c80000"/>
<rect x="505" y="631" width="1" height="3" fill="#c80000"/>
<rect x="535" y="631" width="1" height="3" fill="#c80000"/>
<rect x="550" y="631" width="1" height="3" fill="#c80000"/>
<rect x="565" y="631" width="1" height="3" fill="#c80000"/>
<rect x="596" y="631" width="1" height="3" fill="#c80000"/>
<rect x="612" y="631" width="1" height="3" fill="#c80000"/>
<rect x="627" y="631" width="1" height="3" fill="#c80000"/>
<rect x="658" y="631" width="1" height="3" fill="#c80000"/>
<rect x="675" y="631" width="1" height="3" fill="#c80000"/>
<rect x="685" y="631" width="1" height="3" fill="#c80000"/>
<rect x="713" y="631" width="1" height="3" fill="#c80000"/>
<rect x="728" y="631" width="1" height="3" fill="#c80000"/>
<rect x="743" y="631" width="1" height="3" fill="#c80000"/>
<rect x="775" y="631" width="1" height="3" fill="#c80000"/>
<rect x="791" y="631" width="1" height="3" fill="#c80000"/>
<rect x="808" y="631" width="1" height="3" fill="#c80000"/>
<rect x="842" y="631" width="1" height="3" fill="#c80000"/>
<rect x="857" y="631" width="1" height="3" fill="#c80000"/>
</svg>
<span class="t" style="left:816px;top:2px;color:#c0c0c0;font-size:12px;">复权</span>
<span class="t" style="left:850px;top:2px;color:#c0c0c0;font-size:12px;">叠加</span>
<span class="t" style="left:885px;top:2px;color:#c0c0c0;font-size:12px;">多股</span>
<span class="t" style="left:920px;top:2px;color:#c0c0c0;font-size:12px;">统计</span>
<span class="t" style="left:955px;top:2px;color:#c0c0c0;font-size:12px;">画线</span>
<span class="t" style="left:992px;top:2px;color:#c0c0c0;font-size:12px;">F10</span>
<span class="t" style="left:1025px;top:2px;color:#c0c0c0;font-size:12px;">标记</span>
<span class="t" style="left:1057px;top:2px;color:#c0c0c0;font-size:12px;">+自选</span>
<span class="t" style="left:1096px;top:2px;color:#c0c0c0;font-size:12px;">返回</span>
<span class="t" style="left:28px;top:2px;color:#c0c0c0;font-size:12px;">分时</span>
<span class="t" style="left:61px;top:2px;color:#c0c0c0;font-size:12px;">1分钟</span>
<span class="t" style="left:100px;top:2px;color:#c0c0c0;font-size:12px;">5分钟</span>
<span class="t" style="left:139px;top:2px;color:#c0c0c0;font-size:12px;">15分钟</span>
<span class="t" style="left:185px;top:2px;color:#c0c0c0;font-size:12px;">30分钟</span>
<span class="t" style="left:231px;top:2px;color:#c0c0c0;font-size:12px;">60分钟</span>
<span class="t" style="left:278px;top:2px;color:#54ffff;font-size:12px;">日线</span>
<span class="t" style="left:311px;top:2px;color:#c0c0c0;font-size:12px;">周线</span>
<span class="t" style="left:345px;top:2px;color:#c0c0c0;font-size:12px;">月线</span>
<span class="t" style="left:378px;top:2px;color:#c0c0c0;font-size:12px;">多周期</span>
<span class="t" style="left:423px;top:2px;color:#c0c0c0;font-size:12px;">更多</span>
<span class="t" style="left:450px;top:2px;color:#c0c0c0;font-size:12px;">&gt;</span>
<span class="t" style="left:3px;top:22px;color:#c0c0c0;font-size:12px;">合众思壮(日线.前复权)</span>
<span class="t" style="left:1080px;top:29px;color:#ff3232;font-size:12px;width:41px;text-align:right;">12.00</span>
<span class="t" style="left:1080px;top:54px;color:#ff3232;font-size:12px;width:41px;text-align:right;">11.50</span>
<span class="t" style="left:1080px;top:78px;color:#ff3232;font-size:12px;width:41px;text-align:right;">11.00</span>
<span class="t" style="left:1080px;top:103px;color:#ff3232;font-size:12px;width:41px;text-align:right;">10.50</span>
<span class="t" style="left:1080px;top:128px;color:#ff3232;font-size:12px;width:41px;text-align:right;">10.00</span>
<span class="t" style="left:1080px;top:153px;color:#ff3232;font-size:12px;width:41px;text-align:right;">9.50</span>
<span class="t" style="left:1080px;top:177px;color:#ff3232;font-size:12px;width:41px;text-align:right;">9.00</span>
<span class="t" style="left:1080px;top:202px;color:#ff3232;font-size:12px;width:41px;text-align:right;">8.50</span>
<span class="t" style="left:1080px;top:227px;color:#ff3232;font-size:12px;width:41px;text-align:right;">8.00</span>
<span class="t" style="left:1080px;top:252px;color:#ff3232;font-size:12px;width:41px;text-align:right;">7.50</span>
<span class="t" style="left:1080px;top:276px;color:#ff3232;font-size:12px;width:41px;text-align:right;">7.00</span>
<span class="t" style="left:1080px;top:301px;color:#ff3232;font-size:12px;width:41px;text-align:right;">6.50</span>
<span class="t" style="left:1080px;top:326px;color:#ff3232;font-size:12px;width:41px;text-align:right;">6.00</span>
<span class="t" style="left:1080px;top:351px;color:#ff3232;font-size:12px;width:41px;text-align:right;">5.50</span>
<span class="t" style="left:1080px;top:375px;color:#ff3232;font-size:12px;width:41px;text-align:right;">5.00</span>
<span class="t" style="left:1080px;top:409px;color:#ff3232;font-size:12px;width:41px;text-align:right;">100.0</span>
<span class="t" style="left:1080px;top:451px;color:#ff3232;font-size:12px;width:41px;text-align:right;">80.00</span>
<span class="t" style="left:1080px;top:493px;color:#ff3232;font-size:12px;width:41px;text-align:right;">60.00</span>
<span class="t" style="left:1080px;top:535px;color:#ff3232;font-size:12px;width:41px;text-align:right;">40.00</span>
<span class="t" style="left:1080px;top:577px;color:#ff3232;font-size:12px;width:41px;text-align:right;">20.00</span>
<span class="t" style="left:17px;top:398px;color:#c0c0c0;font-size:12px;">股朋指标网</span>
<span class="t" style="left:83px;top:398px;color:#00e600;font-size:12px;">K: 74.08</span>
<span class="t" style="left:133px;top:398px;color:#ffffff;font-size:12px;">M: 78.84</span>
<span class="t" style="left:184px;top:398px;color:#ff0000;font-size:12px;">股经: 86.02</span>
<span class="t" style="left:250px;top:398px;color:#00c8c8;font-size:12px;">底观察: 0.00</span>
<span class="t" style="left:321px;top:398px;color:#ffff00;font-size:12px;">底背离: 100.00</span>
<span class="t" style="left:406px;top:398px;color:#ffffff;font-size:12px;">顶背离: 18.00</span>
<span class="t" style="left:484px;top:398px;color:#ff0000;font-size:12px;">跟踪: 10.00</span>
<span class="t" style="left:550px;top:398px;color:#ff00ff;font-size:12px;">神偷出现: 0.00</span>
<span class="t" style="left:633px;top:398px;color:#808080;font-size:12px;">顶: 96.31</span>
<span class="t" style="left:687px;top:398px;color:#808080;font-size:12px;">底: 3.69</span>
<span class="t" style="left:184px;top:381px;color:#ffffff;font-size:12px;width:13px;text-align:center;">榜</span>
<span class="t" style="left:583px;top:381px;color:#ffffff;font-size:12px;width:13px;text-align:center;">跌</span>
<span class="t" style="left:687px;top:381px;color:#ffffff;font-size:12px;width:13px;text-align:center;">涨</span>
<span class="t" style="left:986px;top:381px;color:#ffffff;font-size:12px;width:13px;text-align:center;">财</span>
<span class="t" style="left:2px;top:631px;color:#ff3232;font-size:12px;">2024年</span>
<span class="t" style="left:43px;top:631px;color:#ff3232;font-size:12px;">7</span>
<span class="t" style="left:113px;top:631px;color:#ff3232;font-size:12px;">8</span>
<span class="t" style="left:179px;top:631px;color:#ff3232;font-size:12px;">9</span>
<span class="t" style="left:235px;top:631px;color:#ff3232;font-size:12px;">10</span>
<span class="t" style="left:288px;top:631px;color:#ff3232;font-size:12px;">11</span>
<span class="t" style="left:348px;top:631px;color:#ff3232;font-size:12px;">12</span>
<span class="t" style="left:872px;top:631px;color:#e0e0e0;font-size:12px;">2025/08/22/五</span>
<span class="t" style="left:389px;top:38px;color:#c0c0c0;font-size:12px;">11.91</span>
<span class="t" style="left:74px;top:370px;color:#c0c0c0;font-size:12px;">5.10</span>
<span class="t" style="left:770px;top:452px;color:#00ff00;font-size:12px;">顶</span>
<span class="t" style="left:66px;top:575px;color:#ff2020;font-size:12px;">底</span>
<span class="t" style="left:436px;top:575px;color:#ff2020;font-size:12px;">底</span>
<span class="t" style="left:472px;top:575px;color:#ff2020;font-size:12px;">底</span>
<span class="t" style="left:603px;top:575px;color:#ff2020;font-size:12px;">底</span>
<span class="t" style="left:955px;top:575px;color:#ff2020;font-size:12px;">底</span>
<span class="t" style="left:414px;top:631px;color:#ff3232;font-size:12px;">1</span>
<span class="t" style="left:467px;top:631px;color:#ff3232;font-size:12px;">2</span>
<span class="t" style="left:520px;top:631px;color:#ff3232;font-size:12px;">3</span>
<span class="t" style="left:582px;top:631px;color:#ff3232;font-size:12px;">4</span>
<span class="t" style="left:645px;top:631px;color:#ff3232;font-size:12px;">5</span>
<span class="t" style="left:701px;top:631px;color:#ff3232;font-size:12px;">6</span>
<span class="t" style="left:760px;top:631px;color:#ff3232;font-size:12px;">7</span>
<span class="t" style="left:829px;top:631px;color:#ff3232;font-size:12px;">8</span>
<span class="t" style="left:956px;top:631px;color:#ff3232;font-size:12px;">10</span>
<div style="position:absolute;left:1075px;top:294px;width:50px;height:15px;background:#00008b;border:1px solid #c80000;"></div>
<span class="t" style="left:1077px;top:294px;color:#d8d8d8;font-size:12px;">6.46</span>
<div style="position:absolute;left:971px;top:600px;width:159px;height:50px;background:#393535;"></div><span class="t" style="left:971px;top:607px;width:159px;text-align:center;color:#fff;font-size:18px;font-weight:bold;">指标公式网</span><span class="t" style="left:971px;top:628px;width:159px;text-align:center;color:#fff;font-size:16px;">www.zbgs3.com</span>
</div>
</body></html>
